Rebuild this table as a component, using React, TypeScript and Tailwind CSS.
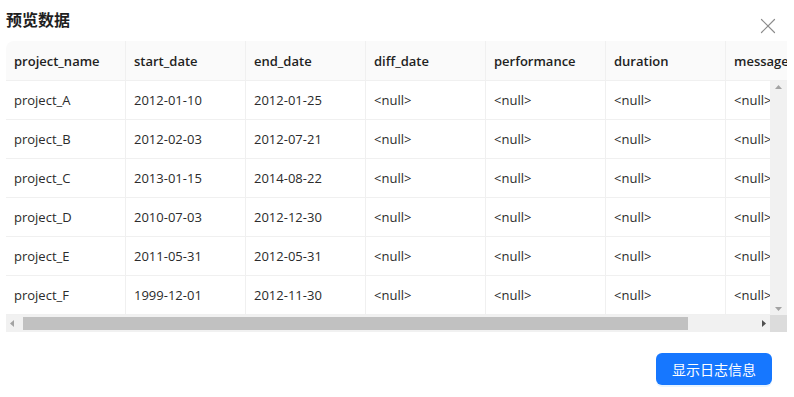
import { X } from "lucide-react"

const columns = ["project_name", "start_date", "end_date", "diff_date", "performance", "duration", "message"]

const rows = [
  ["project_A", "2012-01-10", "2012-01-25"],
  ["project_B", "2012-02-03", "2012-07-21"],
  ["project_C", "2013-01-15", "2014-08-22"],
  ["project_D", "2010-07-03", "2012-12-30"],
  ["project_E", "2011-05-31", "2012-05-31"],
  ["project_F", "1999-12-01", "2012-11-30"],
]

const font = { fontFamily: '"Open Sans", "Noto Sans CJK SC", sans-serif' }

const App = () => {
  return (
    <div className="w-[794px] h-[397px] bg-white overflow-hidden" style={font}>
      <div className="flex items-start justify-between pl-[6px] pr-[13px] h-[41px]">
        <h2 className="mt-[8px] text-[16px] leading-[24px] font-semibold text-[#1f1f1f]">预览数据</h2>
        <button type="button" className="mt-[13px] text-[#8c8c8c]">
          <X size={26} strokeWidth={1.1} />
        </button>
      </div>

      <div className="ml-[6px] w-[781px] overflow-hidden">
        {/* header */}
        <div className="flex h-[40px] bg-[#fafafa] rounded-tl-[8px] border-b border-[#f0f0f0]">
          {columns.map((c) => (
            <div
              key={c}
              className="w-[120px] shrink-0 px-[8px] pt-[2px] flex items-center text-[13px] font-semibold text-[#1f1f1f] border-r border-[#f0f0f0] whitespace-nowrap"
            >
              {c}
            </div>
          ))}
        </div>

        {/* body */}
        <div className="flex">
          <div className="w-[764px] overflow-hidden">
            {rows.map((r) => (
              <div key={r[0]} className="flex h-[39px] border-b border-[#f0f0f0]">
                {[...r, "<null>", "<null>", "<null>", "<null>"].map((v, i) => (
                  <div
                    key={i}
                    className="w-[120px] shrink-0 px-[8px] pt-[2px] flex items-center text-[13px] text-[#2b2b2b] border-r border-[#f0f0f0] whitespace-nowrap"
                  >
                    {v}
                  </div>
                ))}
              </div>
            ))}
          </div>
          <div className="w-[17px] bg-[#f1f1f1] flex flex-col justify-between items-center py-[4px]">
            <svg width="7" height="4" viewBox="0 0 7 4"><path d="M0 4 L3.5 0 L7 4 Z" fill="#a3a3a3" /></svg>
            <svg width="7" height="4" viewBox="0 0 7 4"><path d="M0 0 L3.5 4 L7 0 Z" fill="#a3a3a3" /></svg>
          </div>
        </div>

        {/* horizontal scrollbar */}
        <div className="flex h-[17px]">
          <div className="w-[764px] bg-[#f1f1f1] flex items-center px-[4px]">
            <svg width="4" height="7" viewBox="0 0 4 7"><path d="M4 0 L0 3.5 L4 7 Z" fill="#a3a3a3" /></svg>
            <div className="ml-[9px] w-[665px] h-[13px] bg-[#c1c1c1]" />
            <div className="flex-1" />
            <svg width="4" height="7" viewBox="0 0 4 7"><path d="M0 0 L4 3.5 L0 7 Z" fill="#505050" /></svg>
          </div>
          <div className="w-[17px] bg-[#dcdcdc]" />
        </div>
      </div>

      <div className="flex justify-end pr-[22px] mt-[21px]">
        <button
          type="button"
          className="h-[32px] px-[16px] rounded-[6px] bg-[#1677ff] text-white text-[14px] shadow-[0_2px_0_rgba(5,145,255,0.1)]"
        >
          显示日志信息
        </button>
      </div>
    </div>
  )
}

export default App
